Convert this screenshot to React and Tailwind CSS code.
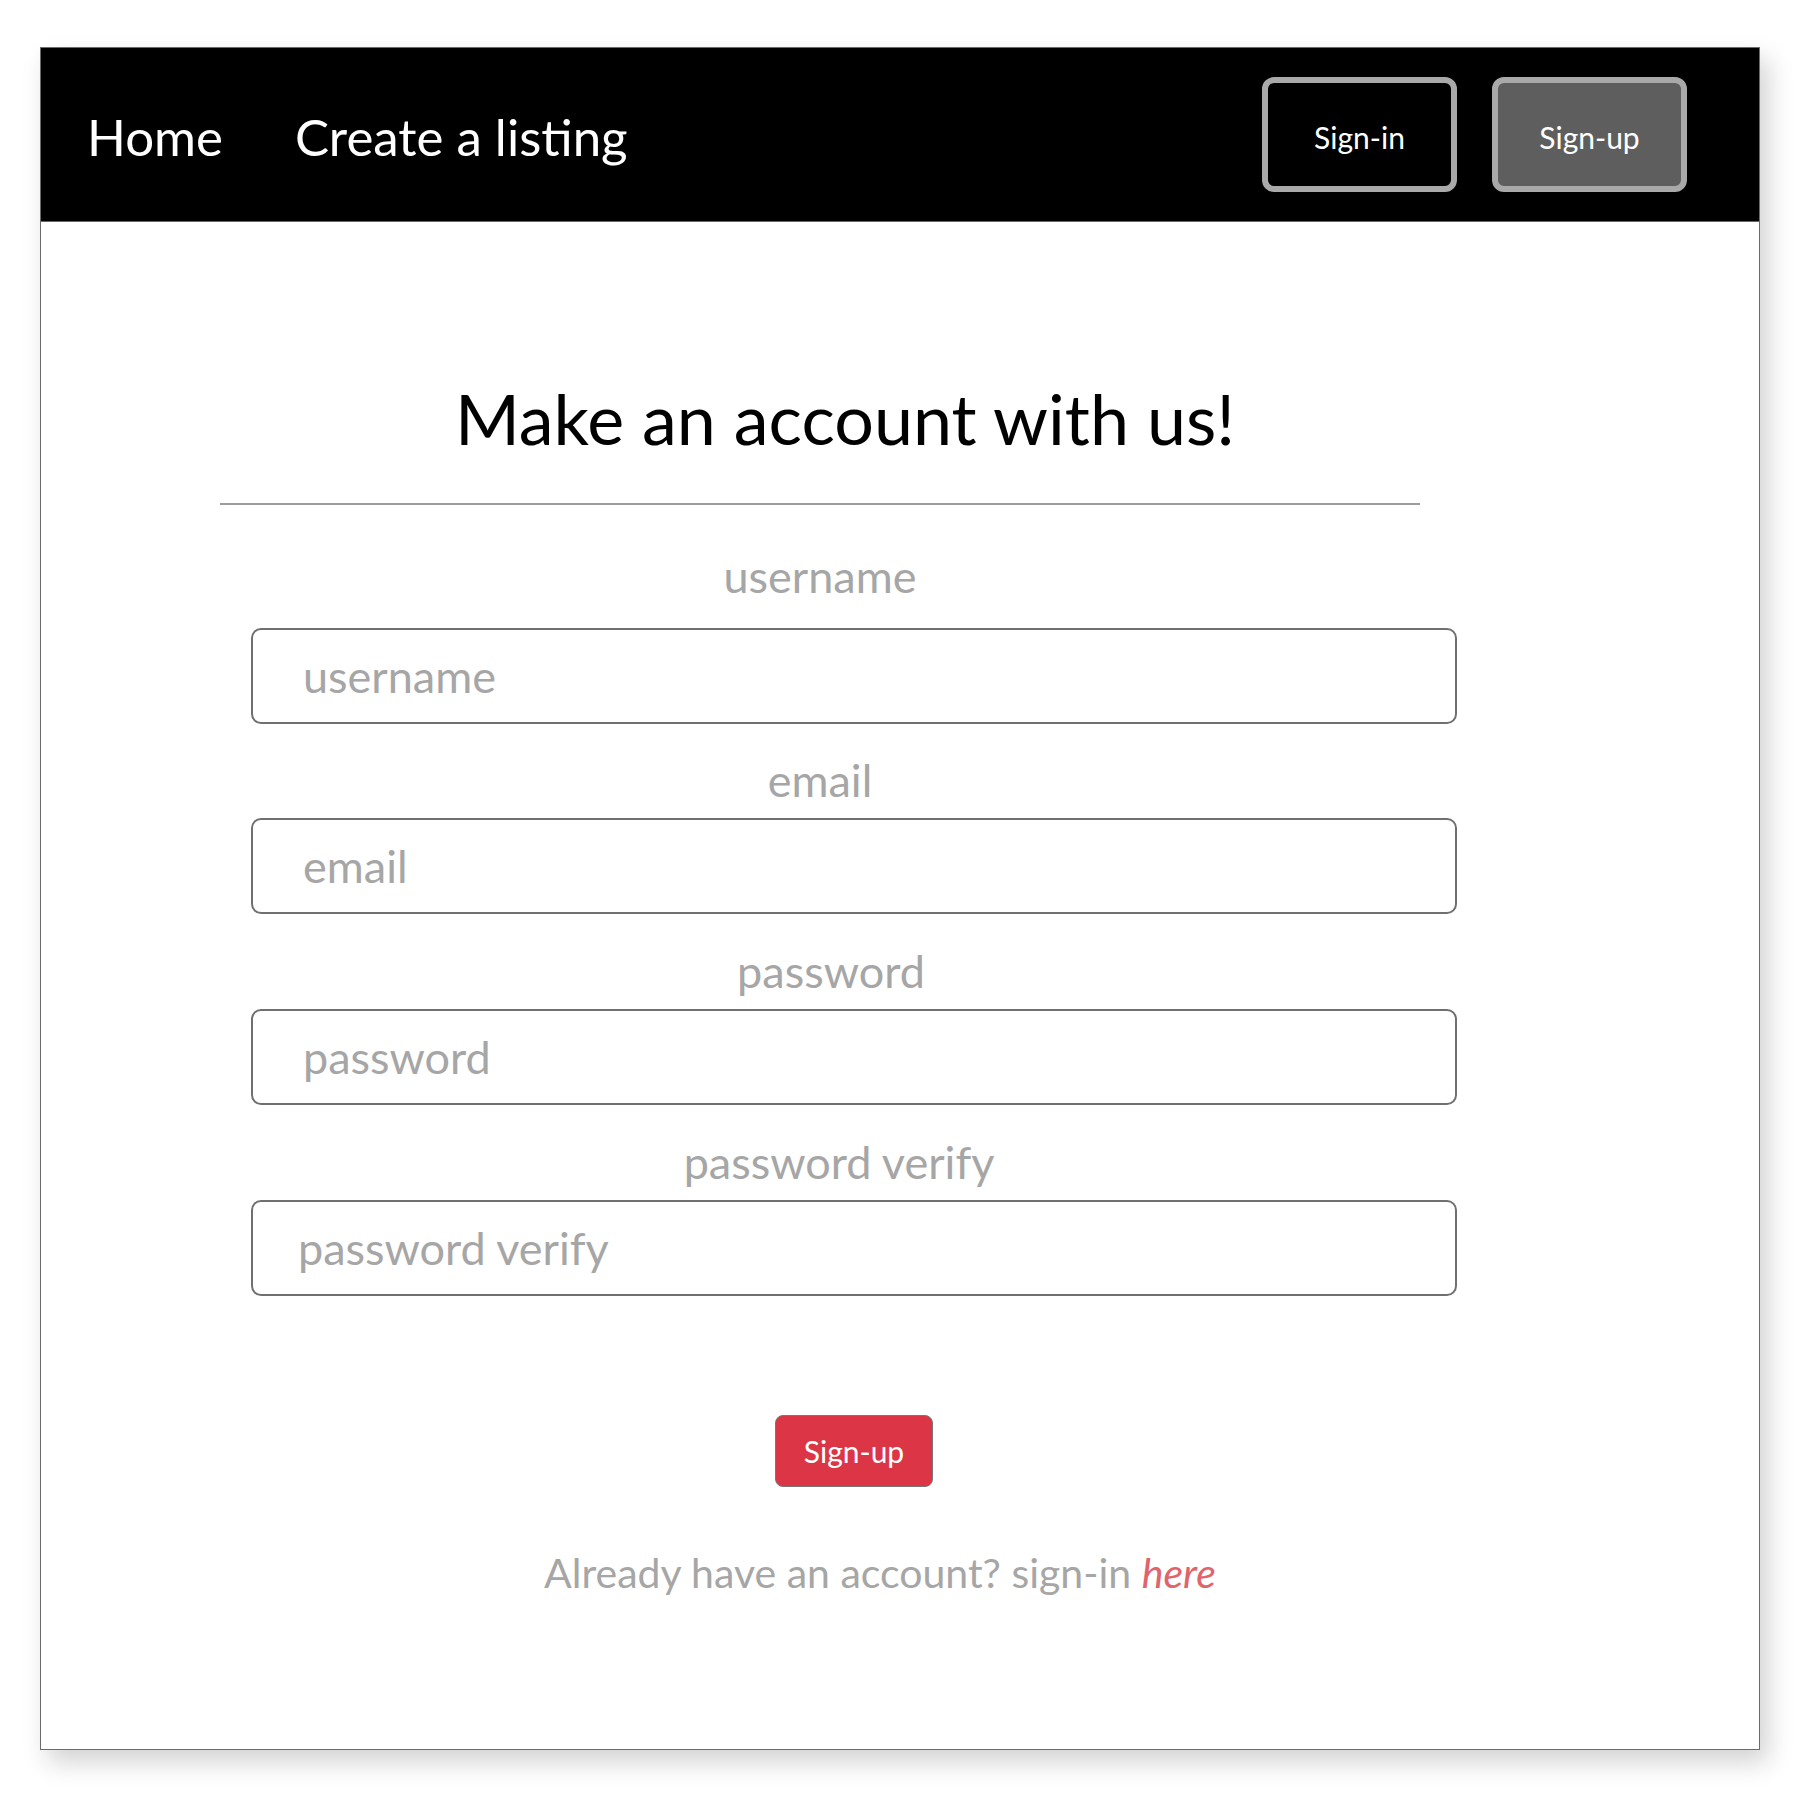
const FIELDS = [
  { name: 'username', type: 'text', labelMt: 'mt-[49px]', labelPl: 'pl-0', inputMt: 'mt-[29px]', inputPl: 'pl-[50px]' },
  { name: 'email', type: 'email', labelMt: 'mt-[34px]', labelPl: 'pl-0', inputMt: 'mt-[15px]', inputPl: 'pl-[50px]' },
  { name: 'password', type: 'password', labelMt: 'mt-[35px]', labelPl: 'pl-[22px]', inputMt: 'mt-[15px]', inputPl: 'pl-[50px]' },
  { name: 'password verify', type: 'password', labelMt: 'mt-[35px]', labelPl: 'pl-[38px]', inputMt: 'mt-[15px]', inputPl: 'pl-[45px]' },
]

export default function App() {
  return (
    <div className="min-h-screen bg-white pt-[47px] pl-[40px] font-['Lato','Open_Sans',sans-serif]">
      <div className="w-[1720px] h-[1703px] border border-[#6b6b6b] bg-white shadow-[8px_12px_24px_rgba(0,0,0,0.18)] flex flex-col">
        {/* Navbar */}
        <nav className="h-[174px] bg-black border-b border-[#666] flex items-center pl-[46px] pr-[72px]">
          <a className="mt-[4px] text-white text-[51px] leading-none">Home</a>
          <a className="mt-[4px] ml-[72px] text-white text-[51px] leading-none">Create a listing</a>
          <div className="ml-auto flex gap-[35px]">
            <button className="w-[195px] h-[115px] pt-[4px] border-[6px] border-[#a9a9a9] rounded-[12px] bg-black text-white text-[30px] leading-none">
              Sign-in
            </button>
            <button className="w-[195px] h-[115px] pt-[4px] border-[6px] border-[#a9a9a9] rounded-[12px] bg-[#5e5e5e] text-white text-[30px] leading-none">
              Sign-up
            </button>
          </div>
        </nav>

        {/* Form */}
        <main className="ml-[179px] w-[1200px] flex flex-col">
          <h1 className="mt-[161px] pl-[50px] text-center text-black text-[70px] leading-none">
            Make an account with us!
          </h1>
          <div className="mt-[50px] h-[2px] bg-[#9c9c9c]" />

          {FIELDS.map((f) => (
            <div key={f.name} className="flex flex-col">
              <label className={`${f.labelMt} ${f.labelPl} text-center text-[#a6a6a6] text-[45px] leading-none`}>
                {f.name}
              </label>
              <input
                type={f.type}
                placeholder={f.name}
                className={`${f.inputMt} ${f.inputPl} ml-[31px] w-[1206px] h-[96px] shrink-0 border-2 border-[#707070] rounded-[10px] text-[45px] outline-none placeholder:text-[#a6a6a6]`}
              />
            </div>
          ))}

          <button className="mt-[119px] ml-[555px] w-[158px] h-[72px] bg-[#dc3545] border border-[#777] rounded-[8px] text-white text-[30px] leading-none">
            Sign-up
          </button>

          <p className="mt-[65px] pl-[120px] text-center text-[#a6a6a6] text-[41px] leading-none">
            Already have an account? sign-in <a className="italic text-[#e0646c]">here</a>
          </p>
        </main>
      </div>
    </div>
  )
}
